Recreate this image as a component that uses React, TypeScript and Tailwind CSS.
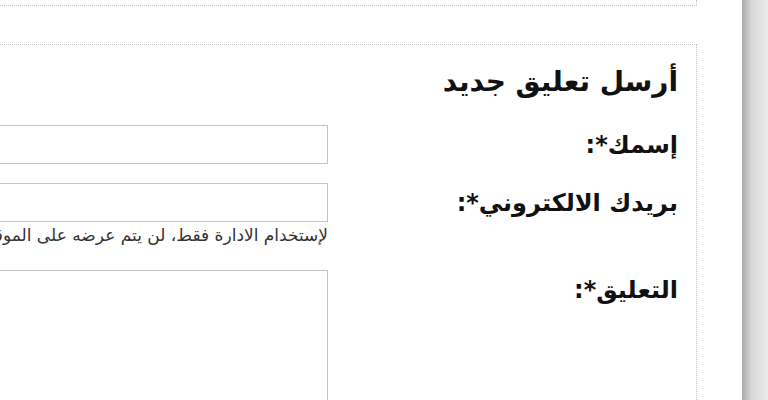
import React from "react";

const Field = ({ label, children }: { label: string; children: React.ReactNode }) => (
  <div className="grid grid-cols-[338px_1fr] gap-x-[12px]">
    <label className="block pt-[6px] text-[24px] font-bold leading-[28px] text-[#111]">{label}</label>
    <div>{children}</div>
  </div>
);

export default function App() {
  return (
    <div
      className="flex h-[400px] w-[768px] overflow-hidden bg-white"
      style={{ fontFamily: '"DejaVu Sans", Tahoma, sans-serif' }}
    >
      <div dir="rtl" className="w-[742px] shrink-0 overflow-hidden bg-white">
        {/* previous box, only its bottom edge shows */}
        <div className="mr-[45px] h-[6px] w-[1000px] border-r border-b border-dotted border-[#c4c4c4]" />

        <div className="mr-[45px] mt-[38px] w-[1000px] border-t border-r border-dotted border-[#c4c4c4] pt-[22px] pr-[18px]">
          <h3 className="mb-[28px] text-[28px] font-bold leading-[30px] text-[#111]">أرسل تعليق جديد</h3>

          <form className="flex flex-col">
            <Field label="إسمك*:">
              <input
                type="text"
                className="block h-[39px] w-full border border-[#c2c2c2] bg-white outline-none"
              />
            </Field>

            <div className="mt-[19px]">
              <Field label="بريدك الالكتروني*:">
                <input
                  type="email"
                  className="block h-[39px] w-full border border-[#c2c2c2] bg-white outline-none"
                />
                <p className="mt-[3px] whitespace-nowrap text-[17px] leading-[20px] text-[#333]">
                  لإستخدام الادارة فقط، لن يتم عرضه على الموقع
                </p>
              </Field>
            </div>

            <div className="mt-[25px]">
              <Field label="التعليق*:">
                <textarea className="block h-[200px] w-full resize-none border border-[#c2c2c2] bg-white outline-none" />
              </Field>
            </div>
          </form>
        </div>
      </div>
      <div className="h-full flex-1 bg-[linear-gradient(to_right,#a9a9a9,#d6d6d6_35%,#ececec)]" />
    </div>
  );
}
